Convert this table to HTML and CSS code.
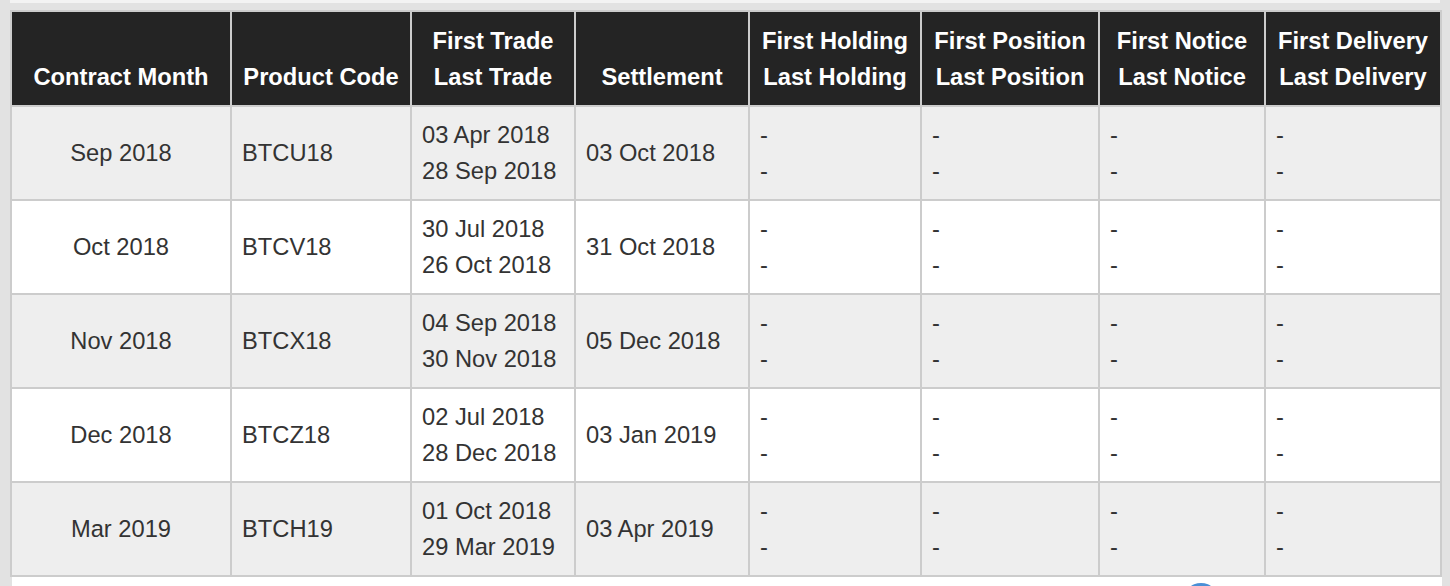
FILE: index.html
```html
<!DOCTYPE html>
<html lang="en">
<head>
<meta charset="utf-8">
<title>Contract calendar</title>
<link rel="stylesheet" href="styles.css">
</head>
<body>
<div class="page">
  <div class="top-strip"></div>
  <div class="table-wrap">
    <table class="cal">
      <colgroup>
        <col class="c1"><col class="c2"><col class="c3"><col class="c4"><col class="c5"><col class="c6"><col class="c7"><col class="c8">
      </colgroup>
      <thead>
        <tr>
          <th>Contract Month</th>
          <th>Product Code</th>
          <th>First Trade<br>Last Trade</th>
          <th>Settlement</th>
          <th>First Holding<br>Last Holding</th>
          <th>First Position<br>Last Position</th>
          <th>First Notice<br>Last Notice</th>
          <th>First Delivery<br>Last Delivery</th>
        </tr>
      </thead>
      <tbody>
        <tr>
          <td class="month">Sep 2018</td><td>BTCU18</td><td>03 Apr 2018<br>28 Sep 2018</td><td>03 Oct 2018</td>
          <td>-<br>-</td><td>-<br>-</td><td>-<br>-</td><td>-<br>-</td>
        </tr>
        <tr>
          <td class="month">Oct 2018</td><td>BTCV18</td><td>30 Jul 2018<br>26 Oct 2018</td><td>31 Oct 2018</td>
          <td>-<br>-</td><td>-<br>-</td><td>-<br>-</td><td>-<br>-</td>
        </tr>
        <tr>
          <td class="month">Nov 2018</td><td>BTCX18</td><td>04 Sep 2018<br>30 Nov 2018</td><td>05 Dec 2018</td>
          <td>-<br>-</td><td>-<br>-</td><td>-<br>-</td><td>-<br>-</td>
        </tr>
        <tr>
          <td class="month">Dec 2018</td><td>BTCZ18</td><td>02 Jul 2018<br>28 Dec 2018</td><td>03 Jan 2019</td>
          <td>-<br>-</td><td>-<br>-</td><td>-<br>-</td><td>-<br>-</td>
        </tr>
        <tr>
          <td class="month">Mar 2019</td><td>BTCH19</td><td>01 Oct 2018<br>29 Mar 2019</td><td>03 Apr 2019</td>
          <td>-<br>-</td><td>-<br>-</td><td>-<br>-</td><td>-<br>-</td>
        </tr>
      </tbody>
    </table>
  </div>
  <div class="below">
    <span class="blue-dot"></span>
  </div>
</div>
</body>
</html>
```

FILE: styles.css
```css
html, body {
  margin: 0;
  padding: 0;
}
body {
  background: #e2e2e2;
  font-family: "Liberation Sans", Arial, Helvetica, sans-serif;
  overflow: hidden;
  height: 586px;
}
.page {
  width: 1450px;
  height: 586px;
  overflow: hidden;
}
.top-strip {
  height: 3px;
  margin-left: 10px;
  width: 1430px;
  background: #f3f3f3;
}
.table-wrap {
  padding: 7px 0 0 10px;
}
.cal {
  border-collapse: separate;
  border-spacing: 0;
  table-layout: fixed;
  width: 1432px;
  border-left: 2px solid #cccccc;
  border-top: 2px solid #cccccc;
  font-size: 23.7px;
  line-height: 36px;
}
.cal th, .cal td {
  box-sizing: border-box;
  border-right: 2px solid #cccccc;
  border-bottom: 2px solid #cccccc;
  padding: 10px 0 10px 10px;
}
.c1 { width: 220px; }
.c2 { width: 180px; }
.c3 { width: 164px; }
.c4 { width: 174px; }
.c5 { width: 172px; }
.c6 { width: 178px; }
.c7 { width: 166px; }
.c8 { width: 176px; }
.cal th {
  background: #242424;
  color: #ffffff;
  font-weight: bold;
  text-align: center;
  vertical-align: bottom;
  padding: 11px 0 10px 0;
  white-space: nowrap;
}
.cal td {
  color: #333333;
  vertical-align: middle;
  text-align: left;
  white-space: nowrap;
}
.cal td.month {
  text-align: center;
  padding-left: 0;
}
.cal tbody tr:nth-child(odd) td {
  background: #eeeeee;
}
.cal tbody tr:nth-child(even) td {
  background: #ffffff;
}
.below {
  margin-left: 12px;
  width: 1430px;
  height: 9px;
  overflow: hidden;
  background: #ffffff;
  display: flex;
  padding-left: 1171px;
  padding-top: 6px;
  box-sizing: border-box;
}
.blue-dot {
  display: block;
  flex: none;
  width: 36px;
  height: 36px;
  border-radius: 50%;
  background: #4a8fd6;
}
```
